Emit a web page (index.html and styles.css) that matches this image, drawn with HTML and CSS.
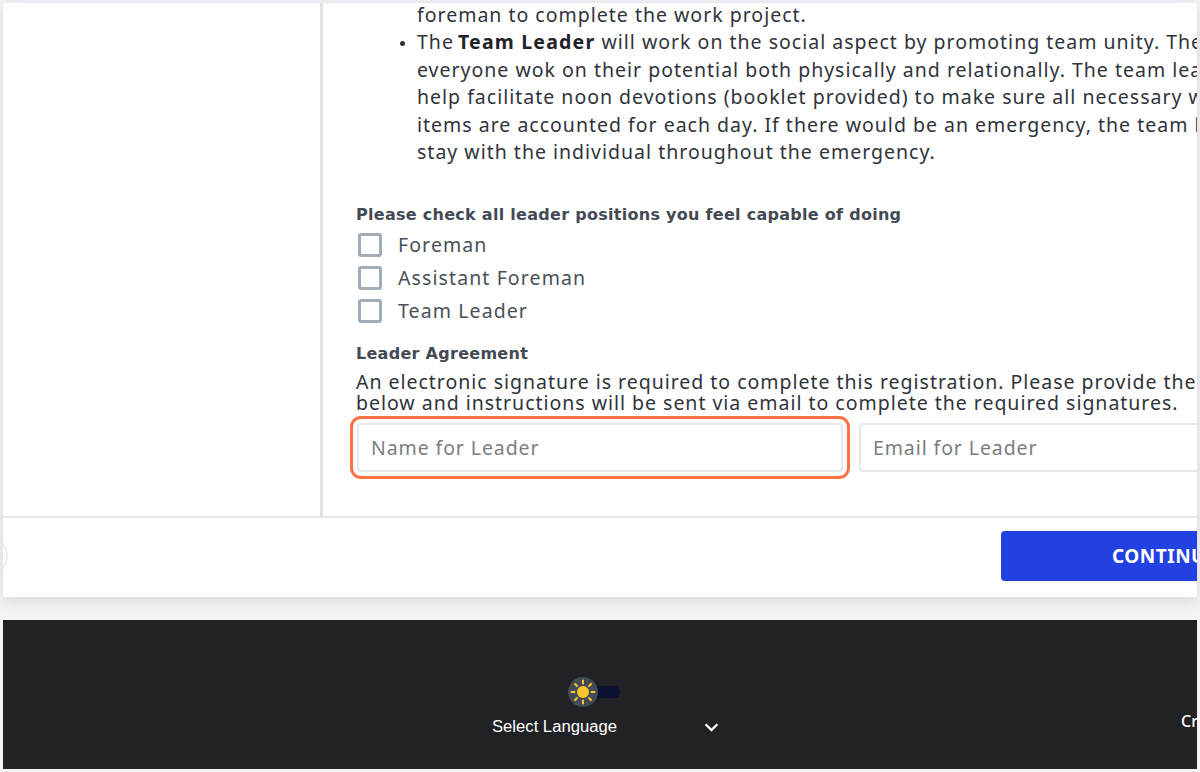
FILE: index.html
```html
<!DOCTYPE html>
<html lang="en">
<head>
<meta charset="utf-8">
<title>Leader Agreement</title>
<link rel="stylesheet" href="styles.css">
</head>
<body>
<div class="card">
  <div class="main">
    <aside class="side"></aside>
    <section class="content">
      <ul class="roles">
        <li class="cont">foreman to complete the work project.</li>
        <li>The <b>Team Leader</b> will work on the social aspect by promoting team unity. The<br>everyone wok on their potential both physically and relationally. The team leader will<br>help facilitate noon devotions (booklet provided) to make sure all necessary work<br>items are accounted for each day. If there would be an emergency, the team leader will<br>stay with the individual throughout the emergency.</li>
      </ul>
      <h3 class="label first">Please check all leader positions you feel capable of doing</h3>
      <label class="check"><input type="checkbox"><span>Foreman</span></label>
      <label class="check"><input type="checkbox"><span>Assistant Foreman</span></label>
      <label class="check"><input type="checkbox"><span>Team Leader</span></label>
      <h3 class="label second">Leader Agreement</h3>
      <p class="note">An electronic signature is required to complete this registration. Please provide the<br>below and instructions will be sent via email to complete the required signatures.</p>
      <div class="fields">
        <input class="field hot" type="text" placeholder="Name for Leader">
        <input class="field" type="text" placeholder="Email for Leader">
      </div>
    </section>
  </div>
  <div class="actions">
    <span class="back"></span>
    <button class="continue" type="button">CONTINUE</button>
  </div>
</div>
<footer class="foot">
  <div class="foot-tools">
    <div class="toggle">
      <span class="knob">
        <svg viewBox="0 0 30 30" width="30" height="30" aria-hidden="true">
          <circle cx="15" cy="15" r="6" fill="#fbc531"/>
          <g stroke="#fbc531" stroke-width="2" stroke-linecap="round">
            <path d="M15 3.500v3M15 23.500v3M3.500 15h3M23.500 15h3M7 7l2 2M21 21l2 2M7 23l2-2M21 9l2-2"/>
          </g>
        </svg>
      </span>
    </div>
    <div class="lang">
      <span>Select Language</span>
      <svg viewBox="0 0 14 10" width="15" height="11" aria-hidden="true"><path d="M1.500 2l5.500 5.500L12.500 2" fill="none" stroke="#fff" stroke-width="2.200"/></svg>
    </div>
  </div>
  <span class="credit">Created</span>
</footer>
</body>
</html>
```
FILE: styles.css
```css
* { box-sizing: border-box; }
html, body { margin: 0; height: 772px; overflow: hidden; }
body { background: #f4f3f7; padding: 3px; font-family: "Noto Sans", sans-serif; color: #2f333a; }

.card { height: 594px; background: #fff; box-shadow: 0 3px 16px rgba(0,0,0,.13); overflow: hidden; }
.main { display: flex; height: 515px; border-bottom: 2px solid #e8e8ea; }
.side { width: 320px; flex: none; border-right: 3px solid #e3e3e5; }
.content { flex: none; width: 1000px; padding-left: 33px; }

.roles { margin: -2px 0 0; padding: 0 0 0 61px; font-size: 19.5px; line-height: 27.4px; white-space: nowrap; letter-spacing: 1px; }
.roles li.cont { list-style: none; }
.roles li::marker { font-size: 14px; }
.roles b { font-weight: 700; color: #1f2328; margin-left: -2px; letter-spacing: 1.2px; }

.label { margin: 0; font-family: "DejaVu Sans", sans-serif; font-weight: 700; font-size: 16px; color: #434a54; letter-spacing: .28px; line-height: 20px; }
.label.first { margin-top: 40px; }
.label.second { margin-top: 17px; }

.check { display: flex; align-items: center; gap: 16px; height: 33px; padding-left: 2px; font-size: 19.500px; color: #4a4f57; letter-spacing: 1.100px; }
.check:first-of-type { margin-top: 3px; }
.check input { appearance: none; margin: 0; width: 24px; height: 24px; border: 3px solid #a3adb8; border-radius: 3px; background: #fff; }

.note { margin: 7px 0 0; font-size: 19.500px; line-height: 21px; color: #2f333a; white-space: nowrap; letter-spacing: .98px; }

.fields { display: flex; gap: 16px; margin-top: 10px; padding-left: 1px; }
.field { width: 486px; height: 49px; flex: none; padding: 0 12px; border: 2px solid #e8e8ea; border-radius: 4px; background: #fff; font: 19.500px "Noto Sans", sans-serif; letter-spacing: .9px; color: #333; }
.field::placeholder { color: #7b7d80; opacity: 1; }
.field.hot { outline: 3px solid #ff7043; outline-offset: 4px; }

.actions { display: flex; justify-content: space-between; align-items: center; height: 77px; padding-bottom: 2px; }
.back { width: 40px; height: 40px; margin-left: -35px; border: 2px solid #ececf0; border-radius: 50%; }
.continue { width: 250px; height: 50px; flex: none; margin-right: -54px; padding: 0 0 0 111px; border: 0; border-radius: 4px; background: #2340e0; color: #fff; font: 700 19px "Noto Sans", sans-serif; text-align: left; white-space: nowrap; letter-spacing: .5px; }

.foot { display: flex; height: 149px; margin-top: 23px; background: #212226; color: #fff; }
.foot-tools { width: 1178px; flex: none; display: flex; flex-direction: column; align-items: flex-start; padding: 57px 0 0 489px; }
.toggle { position: relative; width: 52px; height: 30px; margin-left: 76px; }
.toggle::before { content: ""; display: block; position: absolute; left: 14px; top: 9px; width: 38px; height: 12px; border-radius: 6px; background: #0b1033; }
.knob { position: absolute; left: 0; top: 0; width: 30px; height: 30px; border-radius: 50%; background: #414a55; }
.knob svg { display: block; }
.lang { display: flex; align-items: center; justify-content: space-between; width: 227px; margin-top: 10px; font-family: "Liberation Sans", sans-serif; font-size: 16.650px; }
.credit { margin-top: 90px; font-family: "Noto Sans", sans-serif; font-size: 16px; font-weight: 500; white-space: nowrap; height: 24px; }
```
